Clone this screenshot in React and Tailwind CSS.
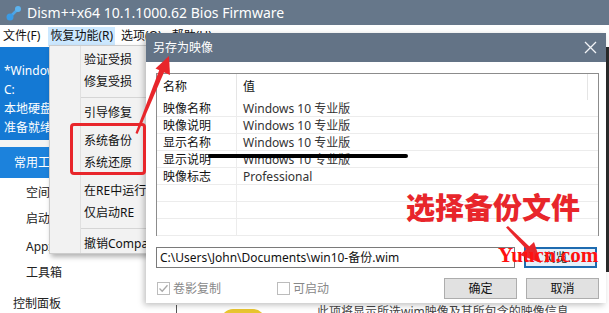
import React from 'react';

const font = { fontFamily: '"Noto Sans", "Noto Sans CJK SC", sans-serif' };

const menuItems = [
  { label: '验证受损' },
  { label: '修复受损' },
  { sep: true },
  { label: '引导修复' },
  { gap: true },
  { label: '系统备份' },
  { label: '系统还原' },
  { gap: true },
  { label: '在RE中运行' },
  { label: '仅启动RE' },
  { sep: true },
  { label: '撤销Compact' },
];

const rows = [
  ['映像名称', 'Windows 10 专业版'],
  ['映像说明', 'Windows 10 专业版'],
  ['显示名称', 'Windows 10 专业版'],
  ['显示说明', 'Windows 10 专业版'],
  ['映像标志', 'Professional'],
  ['', ''],
  ['', ''],
  ['', ''],
];

const Logo = () => (
  <svg width="18" height="18" viewBox="0 0 18 18">
    <line x1="5" y1="13" x2="13" y2="5" stroke="#4da6e8" strokeWidth="2.5" />
    <circle cx="5" cy="13" r="3.5" fill="#3a9be6" />
    <circle cx="13" cy="5" r="3" fill="#5cb3ef" />
  </svg>
);

const Sidebar = () => (
  <div className="w-[150px] flex flex-col shrink-0 bg-white">
    <div className="h-[96px] bg-[#1479d4] text-white text-[12px] pl-[4px] pt-[14px] leading-[19px]">
      <div>*Windows 10 专业版</div>
      <div>C:</div>
      <div>本地硬盘</div>
      <div>准备就绪</div>
    </div>
    <div className="h-[7px] bg-[#f3f3f3]" />
    <div className="h-[32px] bg-[#1c82dc] text-white text-[12px] flex items-center pl-[14px]">常用工具</div>
    <div className="flex flex-col text-[12px] text-[#222] pl-[26px] pt-[6px] gap-[8px] leading-[18px]">
      <div>空间回收</div>
      <div>启动项管理</div>
      <div className="mt-[2px]">Appx管理</div>
      <div>工具箱</div>
    </div>
    <div className="text-[12px] text-[#222] pl-[13px] mt-[13px]">控制面板</div>
  </div>
);

const Checkbox = ({ checked, label }) => (
  <div className="flex items-center gap-[3px] text-[12px] text-[#888]">
    <div className="w-[13px] h-[13px] border border-[#bcbcbc] bg-white flex items-center justify-center">
      {checked && (
        <svg width="11" height="11" viewBox="0 0 11 11">
          <path d="M1.5 5.5 L4.2 8.2 L9.5 2.2" fill="none" stroke="#a8a8a8" strokeWidth="1.3" />
        </svg>
      )}
    </div>
    <span>{label}</span>
  </div>
);

const Dialog = () => (
  <div className="absolute left-[146px] top-[33px] w-[460px] h-[270px] bg-white flex flex-col shadow-[-2px_2px_6px_rgba(0,0,0,0.25)]">
    <div className="h-[29px] bg-[#637386] flex items-center justify-between pl-[7px] pr-[9px] text-white text-[12px]">
      <span>另存为映像</span>
      <svg width="13" height="13" viewBox="0 0 13 13">
        <path d="M1 1 L12 12 M12 1 L1 12" stroke="#f2f4f7" strokeWidth="1.3" />
      </svg>
    </div>
    <div className="flex flex-col pl-[10px] pr-[7px] pt-[11px]">
      <div className="h-[163px] border border-[#8c8c8c] flex flex-col text-[12px] text-[#111]">
        <div className="h-[26px] flex items-center shrink-0">
          <div className="w-[80px] pl-[6px] border-r border-[#e5e5e5] h-full flex items-center">名称</div>
          <div className="flex-1 pl-[6px] h-full flex items-center border-r border-[#e5e5e5]">值</div>
          <div className="w-[10px]" />
        </div>
        {rows.map((r, i) => (
          <div key={i} className="h-[17px] flex items-center border-b border-[#ececec] shrink-0">
            <div className="w-[80px] pl-[6px] border-r border-[#ececec] h-full leading-[17px]">{r[0]}</div>
            <div className="flex-1 pl-[6px] h-full leading-[17px] text-[12px] text-[#333]">{r[1]}</div>
          </div>
        ))}
      </div>
      <div className="flex items-center mt-[11px] gap-[9px]">
        <div className="w-[359px] h-[21px] border border-[#7a7a7a] text-[12px] text-[#111] pl-[3px] leading-[19px]">
          C:\Users\John\Documents\win10-备份.wim
        </div>
        <div className="w-[73px] h-[21px] border-2 border-[#1e6bb0] bg-[#e5f1fb] text-[12px] flex items-center justify-center text-[#111]">
          浏览...
        </div>
      </div>
      <div className="flex items-center mt-[10px]">
        <div className="flex items-center w-[121px] pl-[1px]">
          <Checkbox checked label="卷影复制" />
        </div>
        <Checkbox label="可启动" />
        <div className="flex-1" />
        <div className="w-[73px] h-[21px] border border-[#adadad] bg-[#e1e1e1] text-[12px] flex items-center justify-center text-[#111]">确定</div>
        <div className="w-[73px] h-[21px] border border-[#adadad] bg-[#e1e1e1] text-[12px] flex items-center justify-center text-[#111] ml-[9px]">取消</div>
      </div>
    </div>
  </div>
);

const Menu = () => (
  <div className="absolute left-[49px] top-[45px] w-[130px] h-[209px] bg-[#f2f2f2] border border-[#cccccc] shadow-[2px_3px_5px_rgba(0,0,0,0.3)] py-[3px]">
    <div className="absolute left-[30px] top-0 bottom-0 w-px bg-[#e0e0e0]" />
    {menuItems.map((m, i) => {
      if (m.sep) return <div key={i} className="ml-[31px] h-[9px] flex items-center"><div className="h-px w-full bg-[#d5d5d5]" /></div>;
      if (m.gap) return <div key={i} className="h-[6px]" />;
      return (
        <div key={i} className="h-[22px] pl-[34px] text-[12px] text-[#111] flex items-center whitespace-nowrap">{m.label}</div>
      );
    })}
  </div>
);

const Annotations = () => (
  <>
    {/* redaction stroke over the 显示说明 row */}
    <div className="absolute left-[208px] top-[154px] w-[200px] h-[4px] bg-black rounded-full" />
    <div className="absolute left-[70px] top-[123px] w-[76px] h-[52px] border-[3px] border-[#e8262b] rounded-[4px]" />
    <svg className="absolute inset-0 pointer-events-none" width="609" height="313">
      <polygon points="135.5,133 137.5,134 165,70 160,68" fill="#e8262b" />
      <polygon points="169,56 170,75 155.5,68.5" fill="#e8262b" />
      <polygon points="506,227.5 508,226 531,248 528,251" fill="#e8262b" />
      <polygon points="541,263 520,255 534,242" fill="#e8262b" />
    </svg>
    <div className="absolute left-[406px] top-[192px] text-[29px] font-black text-[#e8262b] leading-none" style={{ fontFamily: '"Noto Sans CJK SC", sans-serif' }}>
      选择备份文件
    </div>
    <div className="absolute left-[498px] top-[245px] text-[21px] font-bold text-[#ff1010] leading-none" style={{ fontFamily: '"Liberation Serif", serif' }}>
      Yuucn.com
    </div>
  </>
);

export default function App() {
  return (
    <div className="w-[609px] h-[313px] relative overflow-hidden bg-white" style={font}>
      <div className="h-[25px] bg-[#66778a] flex items-center pl-[5px] gap-[4px] text-white text-[14px]">
        <Logo />
        <span>Dism++x64 10.1.1000.62 Bios Firmware</span>
      </div>
      <div className="h-[22px] bg-white flex items-center text-[12px] text-[#111] pl-[3px]">
        <div className="pr-[8px]">文件(F)</div>
        <div className="bg-[#cce8ff] h-[19px] flex items-center px-[2px] mr-[6px]">恢复功能(R)</div>
        <div className="pr-[10px]">选项(O)</div>
        <div>帮助(H)</div>
      </div>
      <div className="flex h-[266px]">
        <Sidebar />
        <div className="flex-1 flex flex-col justify-end">
          <div className="h-[8px] flex items-start text-[12px] text-[#444] overflow-hidden">
            <div className="ml-[26px] w-px h-[8px] bg-[#555]" />
            <div className="ml-[44px] w-[44px] h-[12px] mt-[4px] rounded-t-full bg-[#e8c530]" />
            <div className="ml-[52px] mt-[1px] leading-none whitespace-nowrap">此项将显示所选wim映像及其所包含的映像信息</div>
          </div>
        </div>
        <div className="w-[3px] bg-[#2b2b2b] h-[225px]" />
      </div>
      <Menu />
      <Dialog />
      <Annotations />
    </div>
  );
}
